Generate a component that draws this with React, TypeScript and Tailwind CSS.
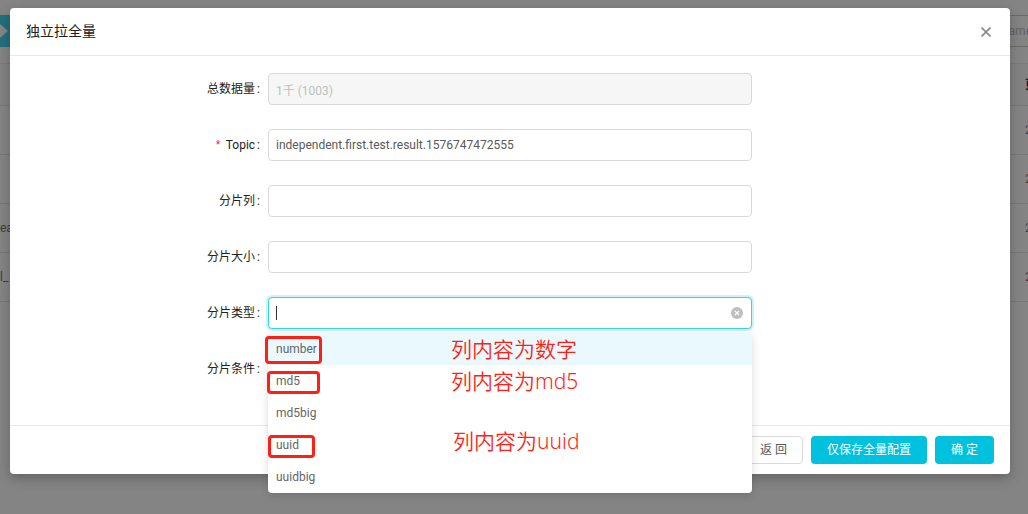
import React, { useId } from "react";

const FONT = "font-[Roboto,'Noto_Sans_CJK_SC',sans-serif]";

type Option = {
  value: string;
  frame?: string;
  note?: string;
  noteClass?: string;
};

const OPTIONS: Option[] = [
  { value: "number", frame: "-left-[3px] top-[3px] w-[57px] h-7", note: "列内容为数字", noteClass: "left-[183px] top-0" },
  { value: "md5", frame: "-left-px top-1.5 w-[53px] h-[23px]", note: "列内容为md5", noteClass: "left-[183px] top-0" },
  { value: "md5big" },
  { value: "uuid", frame: "left-0 top-1.5 w-[47px] h-[23px]", note: "列内容为uuid", noteClass: "left-[185px] -top-1" },
  { value: "uuidbig" },
];

const ROWS = [
  { name: "", time: "2019-12-19" },
  { name: "", time: "2019-12-19" },
  { name: "ea", time: "2019-12-19" },
  { name: "l_", time: "2019-12-19" },
];

function Field({
  label,
  required,
  children,
}: {
  label: string;
  required?: boolean;
  children: (id: string) => React.ReactNode;
}) {
  const id = useId();
  return (
    <div className="grid grid-cols-[25%_50%]">
      <label htmlFor={id} className="pr-2 text-right text-xs leading-8 text-[#222]">
        {required && <span className="mr-1 font-['Liberation_Mono',monospace] leading-none text-[#f5222d]">*</span>}
        {label}
        <span className="ml-0.5">:</span>
      </label>
      <div className="relative">{children(id)}</div>
    </div>
  );
}

const INPUT =
  "block h-8 w-full rounded border border-[#d9d9d9] bg-white px-[7px] text-xs text-[#595959] outline-none disabled:bg-[#f6f6f6] disabled:text-[#bfbfbf]";

function TypeSelect({ id }: { id: string }) {
  return (
    <>
      <input
        id={id}
        type="text"
        role="combobox"
        aria-expanded="true"
        aria-controls="shard-types"
        className="block h-8 w-full rounded border border-[#3bd1e6] bg-white px-[7px] text-xs caret-transparent shadow-[0_0_0_2px_rgba(0,193,222,0.2)] outline-none"
      />
      <span className="absolute left-2 top-[9px] h-3.5 w-px bg-[#333]" />
      <button type="button" aria-label="清除" className="absolute right-[9px] top-[10px]">
        <svg viewBox="0 0 12 12" className="size-3">
          <circle cx="6" cy="6" r="6" fill="#bfbfbf" />
          <path d="M3.9 3.9l4.2 4.2M8.1 3.9L3.9 8.1" stroke="#fff" strokeWidth="1.3" />
        </svg>
      </button>
      <ul
        id="shard-types"
        role="listbox"
        className="absolute inset-x-0 top-9 z-20 rounded bg-white shadow-[0_2px_8px_rgba(0,0,0,0.15)]"
      >
        {OPTIONS.map((o, i) => (
          <li
            key={o.value}
            role="option"
            aria-selected={i === 0}
            className="relative h-8 px-2 text-xs leading-8 text-[#666] aria-selected:rounded-t aria-selected:bg-[#e9f9fe]"
          >
            {o.value}
            {o.frame && <span className={`absolute rounded border-3 border-[#ff1f14] ${o.frame}`} />}
            {o.note && (
              <span
                className={`absolute whitespace-nowrap font-['Noto_Sans','Noto_Sans_CJK_SC',sans-serif] text-[21px] font-[350] leading-8 text-[#ff1f14] ${o.noteClass}`}
              >
                {o.note}
              </span>
            )}
          </li>
        ))}
      </ul>
    </>
  );
}

function Backdrop() {
  return (
    <div className="min-h-screen bg-[#fdfdfd] pt-[15px] text-xs text-[#777]">
      <div className="flex h-8 items-center justify-between">
        <span className="flex h-8 w-10 items-center bg-[#41d7ed]">
          <svg viewBox="0 0 8 14" className="h-3.5 w-2">
            <path d="M0 0l8 7-8 7z" fill="#fff" />
          </svg>
        </span>
        <span className="-mr-1 flex h-8 w-20 items-center justify-end border-y border-[#ccc] text-[#bbb]">name</span>
      </div>
      <table className="mt-4 w-full border-t border-[#ececec]">
        <thead>
          <tr className="h-[42px] border-b border-[#e4e4e4] bg-[#f9f9f9] text-[#333]">
            <th />
            <th className="w-[3px] whitespace-nowrap p-0">
              <span className="block w-[3px] overflow-hidden">更新时间</span>
            </th>
          </tr>
        </thead>
        <tbody>
          {ROWS.map((r, i) => (
            <tr key={i} className="h-[49px] border-b border-[#e4e4e4]">
              <td className="p-0">{r.name}</td>
              <td className="p-0">
                <span className="block w-[3px] overflow-hidden whitespace-nowrap">{r.time}</span>
              </td>
            </tr>
          ))}
        </tbody>
      </table>
    </div>
  );
}

export default function App() {
  return (
    <div className={`relative min-h-screen overflow-hidden ${FONT}`}>
      <Backdrop />
      <div className="absolute inset-0 bg-black/48 pb-10 pl-2.5 pr-[18px] pt-2">
        <section
          role="dialog"
          aria-labelledby="dialog-title"
          className="rounded bg-white shadow-[0_4px_12px_rgba(0,0,0,0.25)]"
        >
          <header className="flex items-center justify-between border-b border-[#e8e8e8] px-4 py-3">
            <h1 id="dialog-title" className="text-sm leading-[23px] text-[#222]">
              独立拉全量
            </h1>
            <button type="button" aria-label="关闭" className="mr-[3px] text-[#888]">
              <svg viewBox="0 0 10 10" className="size-2.5" fill="none" stroke="currentColor" strokeWidth="1.6">
                <path d="M.5.5l9 9M9.5.5l-9 9" />
              </svg>
            </button>
          </header>

          <form className="flex flex-col gap-6 px-4 pb-10 pt-[17px]">
            <Field label="总数据量">
              {(id) => <input id={id} className={INPUT} disabled defaultValue="1千 (1003)" />}
            </Field>
            <Field label="Topic" required>
              {(id) => (
                <input id={id} className={INPUT} defaultValue="independent.first.test.result.1576747472555" />
              )}
            </Field>
            <Field label="分片列">{(id) => <input id={id} className={INPUT} />}</Field>
            <Field label="分片大小">{(id) => <input id={id} className={INPUT} />}</Field>
            <Field label="分片类型">{(id) => <TypeSelect id={id} />}</Field>
            <Field label="分片条件">{(id) => <input id={id} className={INPUT} />}</Field>
          </form>

          <footer className="flex justify-end gap-2 border-t border-[#e8e8e8] px-4 py-2.5 text-xs">
            <button type="button" className="h-7 rounded border border-[#d9d9d9] bg-white px-[15px] text-[#555]">
              返 回
            </button>
            <button type="button" className="h-7 rounded bg-[#00c1de] px-4 text-white">
              仅保存全量配置
            </button>
            <button type="button" className="h-7 rounded bg-[#00c1de] px-4 text-white">
              确 定
            </button>
          </footer>
        </section>
      </div>
    </div>
  );
}
